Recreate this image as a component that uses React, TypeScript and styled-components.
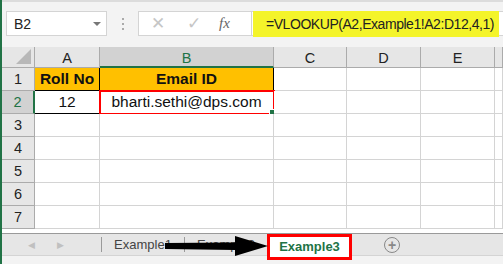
import React from 'react';
import styled, { createGlobalStyle } from 'styled-components';

const Global = createGlobalStyle`
  html, body { margin: 0; padding: 0; background: #fff; }
  body { font-family: "Liberation Sans", Arial, sans-serif; }
`;

const Sheet = styled.div`
  width: 503px;
  height: 264px;
  overflow: hidden;
  position: relative;
  display: flex;
  flex-direction: column;
  border-left: 2px solid #217346;
  box-sizing: border-box;
  background: #fff;
`;

const FormulaBar = styled.div`
  height: 47px;
  flex: none;
  background: #f3f3f3;
  display: flex;
  align-items: flex-start;
  padding: 9px 0 0 4px;
  box-sizing: border-box;
  border-top: 2px solid #dcdcdc;
`;

const NameBox = styled.div`
  width: 101px;
  height: 25px;
  box-sizing: border-box;
  background: #fff;
  border: 1px solid #d4d4d4;
  display: flex;
  align-items: center;
  justify-content: space-between;
  padding: 0 5px 0 7px;
  font-size: 14px;
  color: #222;
`;

const Caret = styled.span`
  width: 0;
  height: 0;
  border-left: 4px solid transparent;
  border-right: 4px solid transparent;
  border-top: 4px solid #777;
`;

const Dots = styled.div`
  width: 31px;
  display: flex;
  flex-direction: column;
  align-items: center;
  gap: 3px;
  padding-top: 7px;
  span {
    width: 2px;
    height: 2px;
    background: #aaa;
  }
`;

const FxBox = styled.div`
  width: 113px;
  height: 25px;
  box-sizing: border-box;
  background: #fff;
  border: 1px solid #d4d4d4;
  border-right: none;
  display: flex;
  align-items: center;
  padding-left: 12px;
  gap: 22px;
  color: #c6c6c6;
`;

const Glyph = styled.span`
  font-size: 17px;
`;

const Fx = styled.span`
  font-family: "Liberation Serif", serif;
  font-style: italic;
  font-size: 15px;
  color: #666;
  margin-left: -4px;
`;

const FormulaInput = styled.div`
  flex: 1;
  height: 25px;
  box-sizing: border-box;
  background: #fff;
  border: 1px solid #d4d4d4;
  border-right: none;
  display: flex;
  align-items: center;
  padding-left: 1px;
`;

const Highlight = styled.span`
  background: #f4f42a;
  height: 26px;
  display: flex;
  align-items: center;
  padding: 0 5px 0 13px;
  font-size: 14px;
  letter-spacing: -0.45px;
  color: #222;
  margin-top: 1px;
`;

const Grid = styled.div`
  height: 186px;
  flex: none;
  display: grid;
  grid-template-columns: 33px 65px 174px 73px 74px 74px 1fr;
  grid-template-rows: 21px repeat(7, 23px);
  overflow: hidden;
`;

const Corner = styled.div`
  background: #e6e6e6;
  border-right: 1px solid #ababab;
  border-bottom: 1px solid #ababab;
  position: relative;
  &::after {
    content: "";
    position: absolute;
    right: 3px;
    bottom: 3px;
    border-left: 15px solid transparent;
    border-bottom: 15px solid #b8b8b8;
  }
`;

const ColHead = styled.div<{ $active?: boolean }>`
  background: ${p => (p.$active ? '#d2d2d2' : '#e6e6e6')};
  border-right: 1px solid #ababab;
  border-bottom: ${p => (p.$active ? '2px solid #217346' : '1px solid #ababab')};
  display: flex;
  align-items: center;
  justify-content: center;
  font-size: 14.5px;
  color: ${p => (p.$active ? '#217346' : '#222')};
  padding-top: 2px;
  box-sizing: border-box;
`;

const RowHead = styled.div<{ $active?: boolean }>`
  background: ${p => (p.$active ? '#d2d2d2' : '#e6e6e6')};
  border-right: ${p => (p.$active ? '2px solid #217346' : '1px solid #ababab')};
  border-bottom: 1px solid #ababab;
  display: flex;
  align-items: center;
  justify-content: center;
  font-size: 14.5px;
  color: ${p => (p.$active ? '#217346' : '#222')};
  box-sizing: border-box;
`;

const Cell = styled.div<{ $fill?: string; $boxed?: boolean; $bold?: boolean }>`
  background: ${p => p.$fill || '#fff'};
  border-right: 1px solid ${p => (p.$boxed ? '#000' : '#d4d4d4')};
  border-bottom: 1px solid ${p => (p.$boxed ? '#000' : '#d4d4d4')};
  display: flex;
  align-items: center;
  justify-content: center;
  font-size: 15.5px;
  font-weight: ${p => (p.$bold ? 700 : 400)};
  color: #111;
  box-sizing: border-box;
  position: relative;
  white-space: nowrap;
`;

const Selected = styled.div`
  position: absolute;
  left: -1px;
  top: -1px;
  right: -2px;
  bottom: -2px;
  border: 2px solid #ff0000;
  &::after {
    content: "";
    position: absolute;
    right: -3px;
    bottom: -3px;
    width: 5px;
    height: 5px;
    background: #217346;
    border: 1px solid #fff;
  }
`;

const TabBar = styled.div`
  height: 21px;
  flex: none;
  background: #e6e6e6;
  border-top: 1px solid #9a9a9a;
  display: flex;
  align-items: center;
  position: relative;
  font-size: 13px;
  color: #444;
`;

const Nav = styled.div`
  width: 99px;
  display: flex;
  gap: 22px;
  padding-left: 26px;
  box-sizing: border-box;
  color: #c0c0c0;
  font-size: 9px;
`;

const Sep = styled.span`
  width: 1px;
  height: 15px;
  background: #9a9a9a;
`;

const Tab = styled.div`
  width: 82px;
  text-align: center;
  color: #444;
`;

const ActiveTab = styled.div`
  width: 85px;
  height: 26px;
  margin-top: 4px;
  box-sizing: border-box;
  background: #fff;
  border: 3px solid #ff0000;
  display: flex;
  align-items: center;
  justify-content: center;
  font-weight: 700;
  color: #217346;
  font-size: 13px;
  position: relative;
  z-index: 1;
`;

const AddButton = styled.div`
  margin-left: 32px;
  width: 14px;
  height: 14px;
  border-radius: 50%;
  border: 1.5px solid #888;
  color: #888;
  display: flex;
  align-items: center;
  justify-content: center;
  font-size: 14px;
  line-height: 1;
  font-weight: 700;
`;

const Arrow = styled.svg`
  position: absolute;
  left: 163px;
  top: 1px;
  z-index: 2;
`;

const Footer = styled.div`
  flex: 1;
  background: #f3f3f3;
  border-top: 1px solid #d4d4d4;
`;

const cols = ['A', 'B', 'C', 'D', 'E'];

export default function App() {
  const rows = [1, 2, 3, 4, 5, 6, 7];
  return (
    <>
      <Global />
      <Sheet>
        <FormulaBar>
          <NameBox>
            B2
            <Caret />
          </NameBox>
          <Dots>
            <span />
            <span />
            <span />
          </Dots>
          <FxBox>
            <Glyph>✕</Glyph>
            <Glyph>✓</Glyph>
            <Fx>fx</Fx>
          </FxBox>
          <FormulaInput>
            <Highlight>=VLOOKUP(A2,Example1!A2:D12,4,1)</Highlight>
          </FormulaInput>
        </FormulaBar>

        <Grid>
          <Corner />
          {cols.map(c => (
            <ColHead key={c} $active={c === 'B'}>{c}</ColHead>
          ))}
          <ColHead />
          {rows.map(r => (
            <React.Fragment key={r}>
              <RowHead $active={r === 2}>{r}</RowHead>
              {r === 1 && (
                <>
                  <Cell $fill="#ffc000" $boxed $bold>Roll No</Cell>
                  <Cell $fill="#ffc000" $boxed $bold>Email ID</Cell>
                </>
              )}
              {r === 2 && (
                <>
                  <Cell $boxed>12</Cell>
                  <Cell $boxed>
                    bharti.sethi@dps.com
                    <Selected />
                  </Cell>
                </>
              )}
              {r > 2 && (
                <>
                  <Cell />
                  <Cell />
                </>
              )}
              <Cell />
              <Cell />
              <Cell />
              <Cell />
            </React.Fragment>
          ))}
        </Grid>

        <TabBar>
          <Nav>
            <span>◀</span>
            <span>▶</span>
          </Nav>
          <Sep />
          <Tab>Example1</Tab>
          <Sep />
          <Tab>Example2</Tab>
          <ActiveTab>Example3</ActiveTab>
          <AddButton>+</AddButton>
          <Arrow width="104" height="22" viewBox="0 0 104 22">
            <path d="M0 8 L70 7.5 L70 1 L103 11 L70 21 L70 15 L0 14 Z" fill="#000" />
          </Arrow>
        </TabBar>
        <Footer />
      </Sheet>
    </>
  );
}
